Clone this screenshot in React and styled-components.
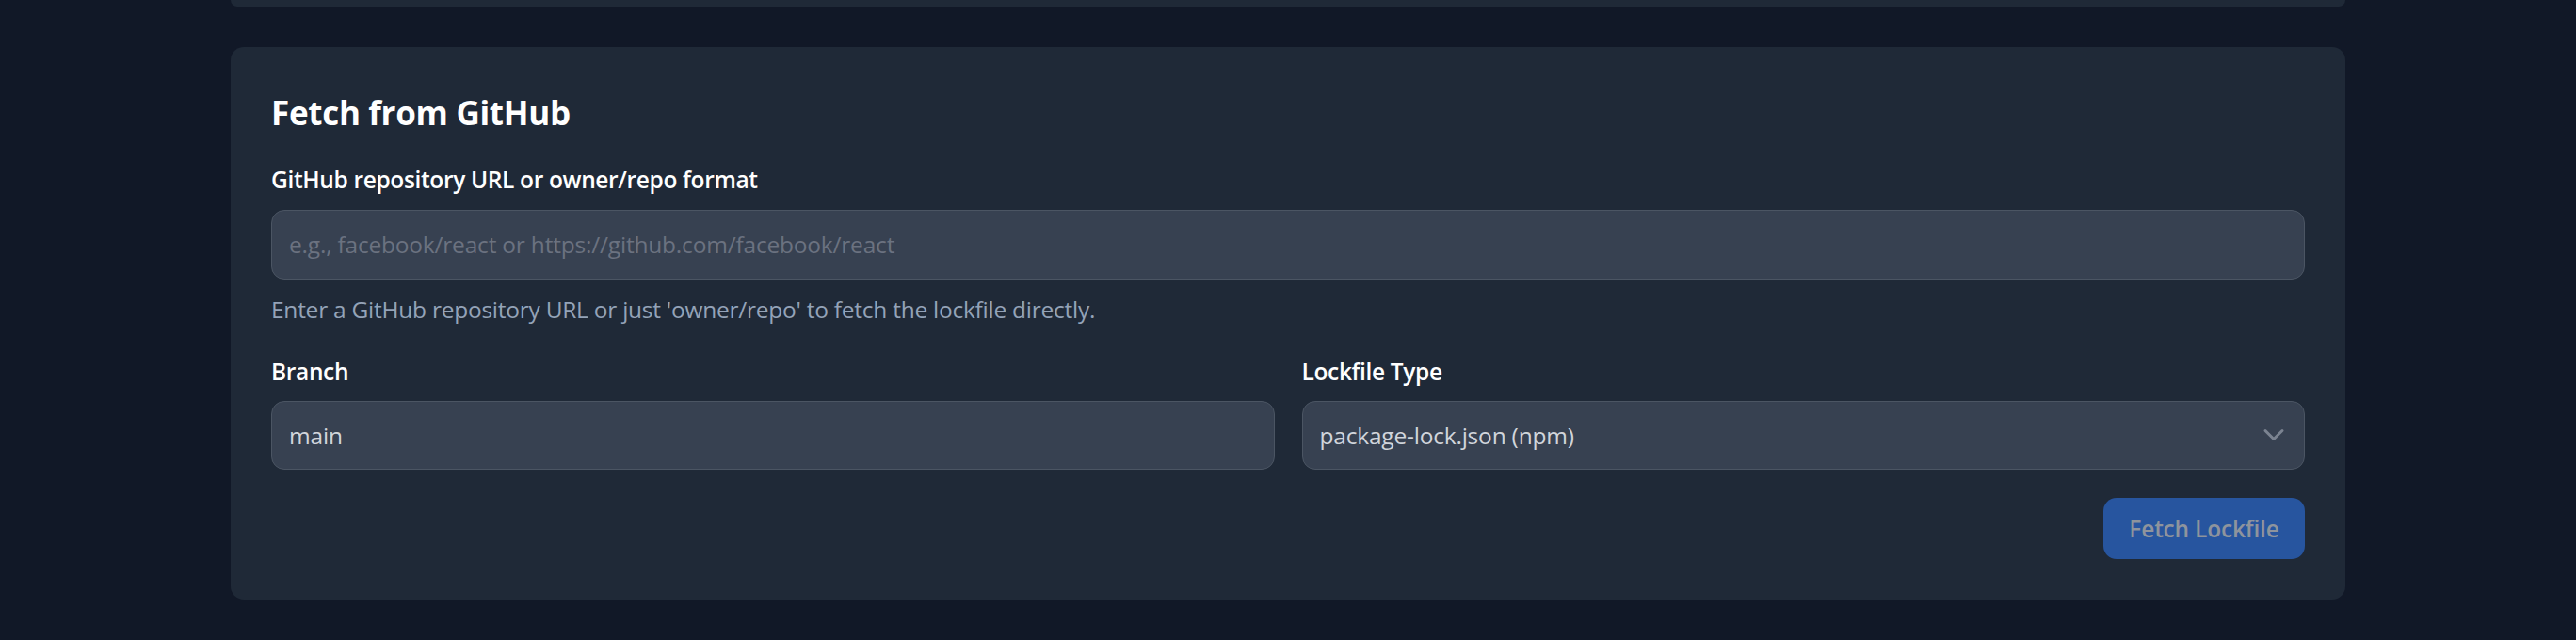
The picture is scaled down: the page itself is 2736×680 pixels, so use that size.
import React from "react";
import styled, { createGlobalStyle } from "styled-components";

const GlobalStyle = createGlobalStyle`
  html, body {
    margin: 0;
    padding: 0;
    background: #111827;
  }
  body {
    font-family: "Open Sans", "Noto Sans", sans-serif;
    color: #f9fafb;
  }
  * { box-sizing: border-box; }
`;

const Page = styled.div`
  width: 2246px;
  margin: 0 auto;
  display: flex;
  flex-direction: column;
  gap: 43px;
`;

const PrevCard = styled.div`
  height: 7px;
  background: #1f2937;
  border-radius: 0 0 14px 14px;
`;

const Card = styled.section`
  background: #1f2937;
  border-radius: 14px;
  padding: 42px 43px 43px;
  display: flex;
  flex-direction: column;
`;

const Title = styled.h2`
  margin: 0;
  font-size: 35px;
  line-height: 55px;
  font-weight: 700;
  color: #ffffff;
  letter-spacing: -0.3px;
`;

const Label = styled.label`
  display: block;
  margin-top: ${(p) => p.$mt || 0}px;
  font-size: 24.5px;
  line-height: 35px;
  font-weight: 600;
  color: #ffffff;
  letter-spacing: -0.35px;
`;

const fieldStyles = `
  width: 100%;
  height: 73.5px;
  background: #374151;
  border: 1px solid #4b5563;
  border-radius: 14px;
  padding: 0 18px;
  font-family: "Open Sans", "Noto Sans", sans-serif;
  font-size: 24.5px;
  letter-spacing: -0.2px;
  color: #d1d5db;
  outline: none;
`;

const TextInput = styled.input`
  ${fieldStyles}
  display: block;
  margin-top: ${(p) => p.$mt || 0}px;
  &::placeholder {
    color: #6b7280;
  }
`;

const Help = styled.p`
  margin: 14.5px 0 0;
  font-size: 24.5px;
  line-height: 35px;
  color: #94a3b8;
  letter-spacing: -0.25px;
`;

const Row = styled.div`
  display: grid;
  grid-template-columns: 1fr 1fr;
  column-gap: 29px;
  margin-top: 31px;
`;

const Field = styled.div`
  display: flex;
  flex-direction: column;
`;

const SelectWrap = styled.div`
  position: relative;
  margin-top: 13.7px;
`;

const Select = styled.select`
  ${fieldStyles}
  display: block;
  appearance: none;
  -webkit-appearance: none;
  cursor: pointer;
`;

const Chevron = styled.svg`
  position: absolute;
  right: 15px;
  top: 50%;
  transform: translateY(-50%);
  pointer-events: none;
`;

const Actions = styled.div`
  display: flex;
  justify-content: flex-end;
  margin-top: 29.5px;
`;

const Button = styled.button`
  height: 65px;
  width: 214px;
  padding: 0;
  border: none;
  border-radius: 14px;
  background: #27559f;
  color: #8e949d;
  font-family: "Open Sans", "Noto Sans", sans-serif;
  font-size: 24.5px;
  font-weight: 600;
  letter-spacing: -0.2px;
  cursor: not-allowed;
`;

export default function App() {
  return (
    <>
      <GlobalStyle />
      <Page>
        <PrevCard />
        <Card>
          <Title>Fetch from GitHub</Title>
          <Label $mt={26}>GitHub repository URL or owner/repo format</Label>
          <TextInput
            $mt={15}
            placeholder="e.g., facebook/react or https://github.com/facebook/react"
          />
          <Help>
            Enter a GitHub repository URL or just 'owner/repo' to fetch the lockfile directly.
          </Help>
          <Row>
            <Field>
              <Label>Branch</Label>
              <TextInput $mt={13.7} defaultValue="main" />
            </Field>
            <Field>
              <Label>Lockfile Type</Label>
              <SelectWrap>
                <Select defaultValue="npm">
                  <option value="npm">package-lock.json (npm)</option>
                  <option value="yarn">yarn.lock (yarn)</option>
                  <option value="pnpm">pnpm-lock.yaml (pnpm)</option>
                </Select>
                <Chevron width="36" height="36" viewBox="0 0 24 24" fill="none" stroke="#7b8391" strokeWidth="2" strokeLinecap="round" strokeLinejoin="round">
                  <path d="m6 9 6 6 6-6" />
                </Chevron>
              </SelectWrap>
            </Field>
          </Row>
          <Actions>
            <Button disabled>Fetch Lockfile</Button>
          </Actions>
        </Card>
      </Page>
    </>
  );
}
